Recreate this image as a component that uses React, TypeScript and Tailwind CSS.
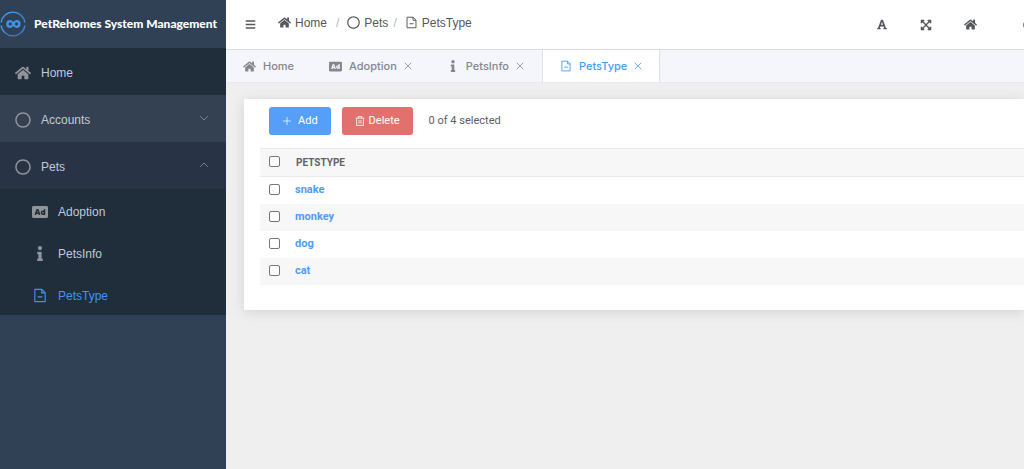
import React, { useState } from 'react';
import { FaAd, FaBars, FaExpandArrowsAlt, FaFont, FaHome, FaInfo, FaRegCircle } from 'react-icons/fa';

interface IconProps {
  className?: string;
}

function LogoIcon() {
  return (
    <svg viewBox="0 0 26 26" className="h-[26px] w-[26px] shrink-0" fill="none" aria-hidden="true">
      <defs>
        <linearGradient id="ring" x1="0" y1="0" x2="1" y2="1">
          <stop offset="0" stopColor="#3fa9ee" />
          <stop offset="1" stopColor="#3d76d8" />
        </linearGradient>
      </defs>
      <path d="M1.1 11.6A12 12 0 0 1 24.9 11.6M24.9 14.4A12 12 0 0 1 1.1 14.4" stroke="url(#ring)" strokeWidth="1.3" />
      <path
        d="M13.4 13C12.3 10.9 11.5 10.1 10.3 10.1a2.9 2.9 0 0 0 0 5.8c1.4 0 2.2-1.2 3.1-2.9s1.7-2.9 3.1-2.9a2.9 2.9 0 0 1 0 5.8c-1.2 0-2-.8-3.1-2.9z"
        stroke="#3f94ea"
        strokeWidth="2.3"
      />
    </svg>
  );
}

function DocumentIcon({ className }: IconProps) {
  return (
    <svg viewBox="0 0 14 16" className={className} fill="none" stroke="currentColor" strokeWidth="1.2" aria-hidden="true">
      <path d="M1.5 1.5h7.5l3.5 3.5v9.5h-11z" strokeLinejoin="round" />
      <path d="M8.8 1.5V5.2h3.7M4.5 9.5h5" />
    </svg>
  );
}

function ChevronIcon({ className }: IconProps) {
  return (
    <svg viewBox="0 0 10 6" className={className} fill="none" stroke="currentColor" aria-hidden="true">
      <path d="M1.2 1.2L5 5l3.8-3.8" />
    </svg>
  );
}

function CloseIcon() {
  return (
    <svg viewBox="0 0 8 8" className="h-2 w-2" fill="none" stroke="currentColor" strokeWidth="0.8" aria-hidden="true">
      <path d="M.8.8l6.4 6.4M7.2.8L.8 7.2" />
    </svg>
  );
}

function PlusIcon() {
  return (
    <svg viewBox="0 0 10 10" className="h-[10px] w-[10px]" fill="none" stroke="currentColor" strokeWidth="0.7" aria-hidden="true">
      <path d="M5 1v8M1 5h8" />
    </svg>
  );
}

function TrashIcon() {
  return (
    <svg viewBox="0 0 10 10" className="h-[10px] w-[10px]" fill="none" stroke="currentColor" strokeWidth="0.8" aria-hidden="true">
      <path d="M.6 2.2h8.8M3.2 2V.6h3.6V2M1.6 2.2v7.2h6.8V2.2M4 4v3.6M6 4v3.6" />
    </svg>
  );
}

const submenu = [
  { name: 'Adoption', icon: <FaAd className="h-[16px] w-[16px] text-[#909399]" /> },
  { name: 'PetsInfo', icon: <FaInfo className="h-[15px] w-[16px] text-[#909399]" /> },
  { name: 'PetsType', icon: <DocumentIcon className="h-[15px] w-[16px]" /> },
];

const tabs = [
  { name: 'Home', icon: <FaHome className="h-[13px] w-[13px]" />, closable: false },
  { name: 'Adoption', icon: <FaAd className="h-[13px] w-[13px]" />, closable: true },
  { name: 'PetsInfo', icon: <FaInfo className="h-3 w-3" />, closable: true },
  { name: 'PetsType', icon: <DocumentIcon className="h-3 w-3" />, closable: true },
];

const petTypes = ['snake', 'monkey', 'dog', 'cat'];

const checkboxClass =
  'block h-[11px] w-[11px] appearance-none rounded-[2px] border border-[#767676] bg-white checked:border-[#409eff] checked:bg-[#409eff]';

function Sidebar() {
  return (
    <aside className="w-[226px] shrink-0 bg-[#304156] text-[#bfcbd9]">
      <div className="flex h-12 items-center gap-2 whitespace-nowrap font-[Lato,sans-serif] text-xs font-black text-white">
        <LogoIcon />
        PetRehomes System Management
      </div>
      <nav>
        <a href="#home" className="flex h-[47px] items-center gap-[10px] bg-[#202d3b] px-[15px] pt-[3px]">
          <FaHome className="h-4 w-4 text-[#909399]" />
          Home
        </a>
        <button type="button" className="flex h-[47px] w-full items-center gap-[10px] bg-[#344153] px-[15px] pt-[3px] text-left">
          <FaRegCircle className="h-4 w-4 text-[#909399]" />
          <span className="flex-1">Accounts</span>
          <ChevronIcon className="mr-[2px] mb-1 h-[6px] w-[10px] text-[#78828f]" />
        </button>
        <button
          type="button"
          aria-expanded="true"
          className="flex h-[47px] w-full items-center gap-[10px] bg-[#283445] px-[15px] pt-[3px] text-left"
        >
          <FaRegCircle className="h-4 w-4 text-[#909399]" />
          <span className="flex-1">Pets</span>
          <ChevronIcon className="mr-[2px] mb-1 h-[6px] w-[10px] rotate-180 text-[#78828f]" />
        </button>
        <div className="bg-[#202d3b]">
          {submenu.map((item) => (
            <a
              key={item.name}
              href={`#${item.name}`}
              className={`flex h-[42px] items-center gap-[10px] pt-[3px] pl-8 ${item.name === 'PetsType' ? 'text-[#4394f0]' : ''}`}
            >
              {item.icon}
              {item.name}
            </a>
          ))}
        </div>
      </nav>
    </aside>
  );
}

export default function App() {
  const [active, setActive] = useState('PetsType');
  const [selected, setSelected] = useState<string[]>([]);

  const toggle = (name: string) => {
    setSelected(selected.includes(name) ? selected.filter((n) => n !== name) : [...selected, name]);
  };

  const toggleAll = () => {
    setSelected(selected.length === petTypes.length ? [] : petTypes);
  };

  return (
    <div className="flex min-h-screen overflow-hidden bg-[#efefef] font-['Liberation_Sans',sans-serif] text-xs">
      <Sidebar />
      <div className="min-w-0 flex-1">
        <header className="flex h-[50px] items-center justify-between overflow-hidden border-b border-[#d8dce5] bg-white pl-[19px] text-[#55575c]">
          <div className="flex items-center gap-[22px] pb-1">
            <button type="button" aria-label="Toggle menu" className="pt-1">
              <FaBars className="h-[11px] w-[11px]" />
            </button>
            <nav aria-label="Breadcrumb" className="flex items-center">
              <a href="#home" className="flex items-center gap-1">
                <FaHome className="h-[13px] w-[13px]" />
                Home
              </a>
              <span className="mr-2 ml-[9px] text-[#b4b9c4]">/</span>
              <a href="#pets" className="flex items-center gap-1">
                <FaRegCircle className="h-[13px] w-[13px]" />
                Pets
              </a>
              <span className="mr-2 ml-[5px] text-[#b4b9c4]">/</span>
              <span className="flex items-center gap-1">
                <DocumentIcon className="h-[13px] w-[13px]" />
                PetsType
              </span>
            </nav>
          </div>
          <div className="-mr-[11px] flex items-center gap-8">
            <button type="button" aria-label="Font size">
              <FaFont className="h-[11px] w-3" />
            </button>
            <button type="button" aria-label="Full screen">
              <FaExpandArrowsAlt className="h-3 w-3" />
            </button>
            <button type="button" aria-label="Home">
              <FaHome className="h-[13px] w-[13px]" />
            </button>
            <button type="button" aria-label="Account" className="ml-[14px]">
              <FaRegCircle className="h-3 w-3" />
            </button>
          </div>
        </header>

        <div className="flex h-[33px] border-b border-[#e8eaef] bg-[#f4f6fb] font-[Inter,sans-serif] text-[11px] font-medium">
          {tabs.map((tab) => (
            <button
              key={tab.name}
              type="button"
              onClick={() => setActive(tab.name)}
              className={`flex items-center gap-[7px] border-r px-[17px] ${
                tab.name === active
                  ? 'border-l border-[#dde1ea] bg-white text-[#409eff]'
                  : 'border-transparent text-[#85878c]'
              }`}
            >
              {tab.icon}
              <span>{tab.name}</span>
              {tab.closable && <CloseIcon />}
            </button>
          ))}
        </div>

        <main className="pt-4 pl-[18px] font-[Roboto,sans-serif]">
          <section className="bg-white pt-2 pb-[25px] pl-4 shadow-[0_2px_12px_rgba(0,0,0,0.12)]">
            <div className="mb-[13px] flex items-center pl-[9px] text-[11px]">
              <button type="button" className="mr-[11px] flex h-7 items-center gap-[6px] rounded-[3px] bg-[#559ff9] px-[13px] text-white">
                <PlusIcon />
                Add
              </button>
              <button type="button" className="mr-4 flex h-7 items-center gap-1 rounded-[3px] bg-[#e2716e] px-[13px] text-white">
                <TrashIcon />
                Delete
              </button>
              <span className="text-[#5c5e62]">
                {selected.length} of {petTypes.length} selected
              </span>
            </div>
            <table className="w-full border-collapse text-left text-[11px]">
              <thead>
                <tr className="h-7 border-y border-[#ebebeb] bg-[#f7f7f7] text-[#606266]">
                  <th className="w-[35px] pb-[2px] pl-[9px]">
                    <input
                      type="checkbox"
                      aria-label="Select all"
                      className={checkboxClass}
                      checked={selected.length === petTypes.length}
                      onChange={toggleAll}
                    />
                  </th>
                  <th className="pl-px text-[10px] font-bold uppercase">PetsType</th>
                </tr>
              </thead>
              <tbody>
                {petTypes.map((name) => (
                  <tr key={name} className="h-[27px] even:bg-[#f7f7f7]">
                    <td className="pb-[2px] pl-[9px]">
                      <input
                        type="checkbox"
                        aria-label={name}
                        className={checkboxClass}
                        checked={selected.includes(name)}
                        onChange={() => toggle(name)}
                      />
                    </td>
                    <td className="font-bold text-[#4f9cf8]">
                      <a href={`#${name}`}>{name}</a>
                    </td>
                  </tr>
                ))}
              </tbody>
            </table>
          </section>
        </main>
      </div>
    </div>
  );
}
